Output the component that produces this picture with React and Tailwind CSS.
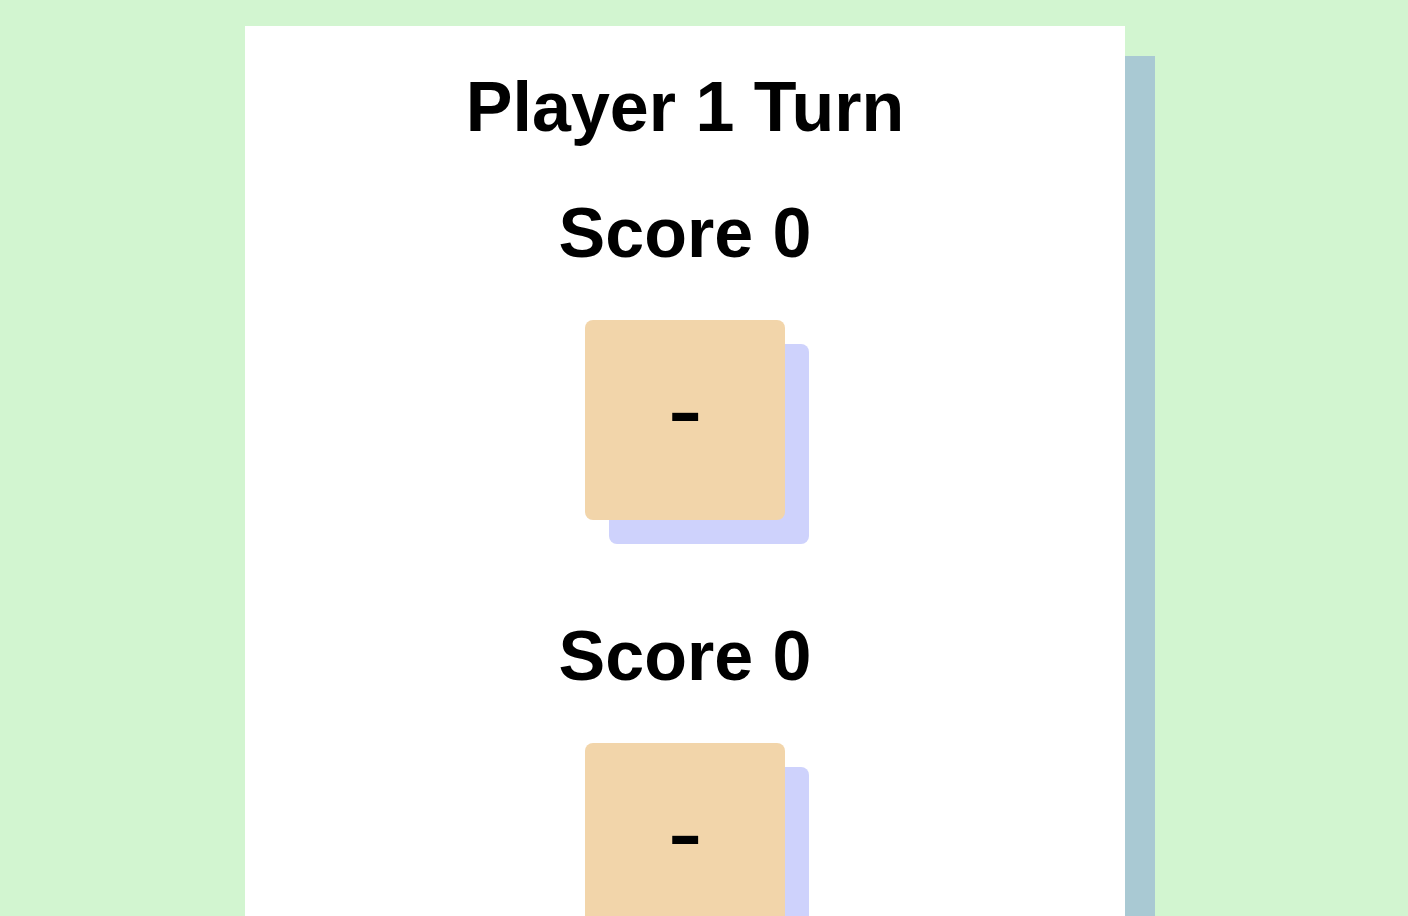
import React from "react";

const font = { fontFamily: '"Liberation Sans", Arial, Helvetica, sans-serif' };

function Player({ score }) {
  return (
    <div className="flex flex-col items-center">
      <h2 className="text-[70px] font-bold leading-none text-black">Score {score}</h2>
      <div className="mt-[52px] flex h-[200px] w-[200px] items-center justify-center rounded-lg bg-[#f2d5aa] shadow-[24px_24px_0_#ced2fc]">
        <span className="text-[68px] font-bold leading-none text-black scale-x-150 -translate-y-[9px]">-</span>
      </div>
    </div>
  );
}

export default function App() {
  return (
    <div className="min-h-screen bg-[#d2f5d0] pt-[26px] pb-[60px]" style={font}>
      <div className="ml-[245px] w-[880px] bg-white pt-[46px] pb-[80px] shadow-[30px_30px_0_#a9c9d3] flex flex-col items-center">
        <h1 className="text-[70px] font-bold leading-none text-black">Player 1 Turn</h1>
        <div className="mt-[56px] flex flex-col items-center gap-[101px]">
          <Player score={0} />
          <Player score={0} />
        </div>
      </div>
    </div>
  );
}
